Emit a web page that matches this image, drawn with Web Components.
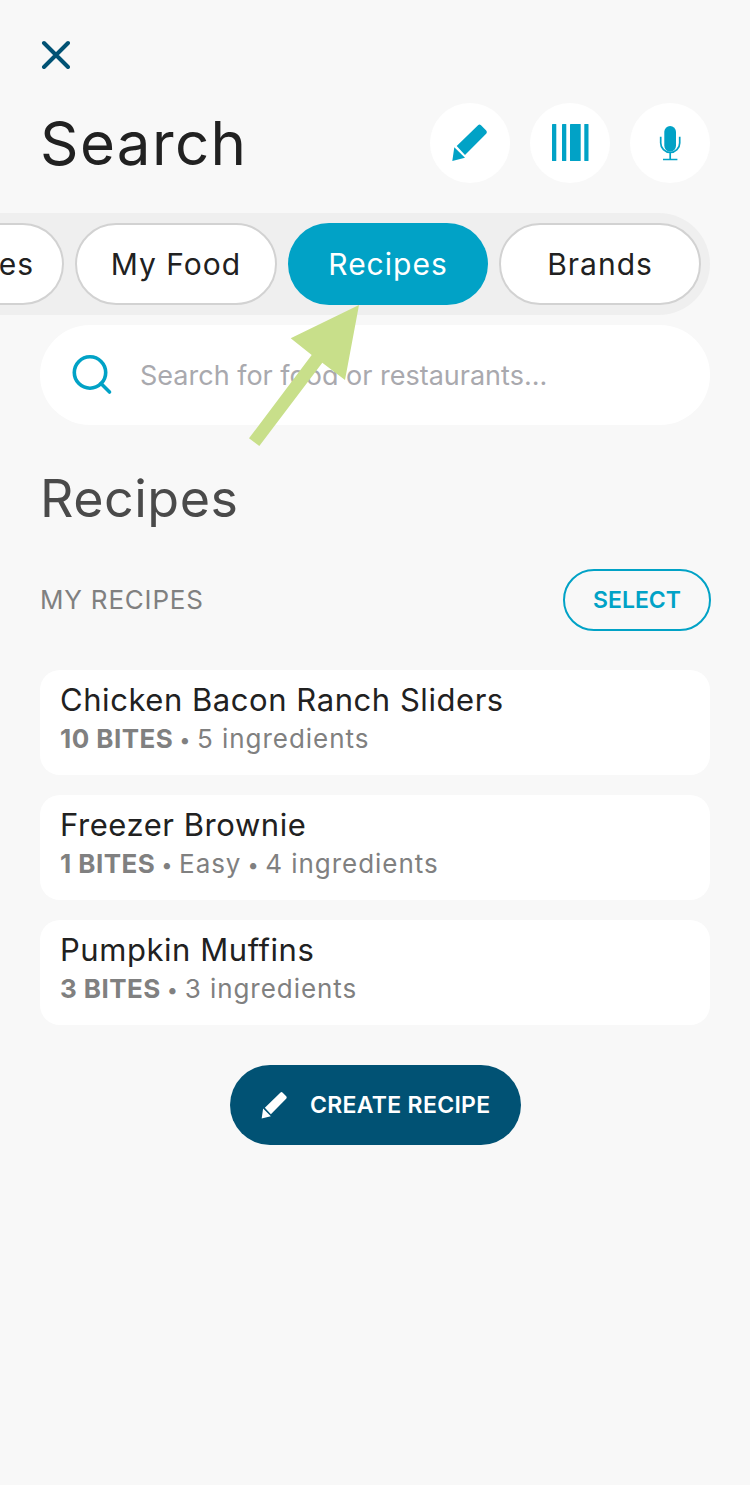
<!DOCTYPE html>
<html>
<head>
<meta charset="utf-8">
<title>Search</title>
<style>
  html, body { margin: 0; background: #f8f8f8; }
  body { font-family: Inter, "Liberation Sans", sans-serif; color: #212121; }
</style>
</head>
<body>
<search-screen>
  <search-header></search-header>
  <tab-strip>
    <tab-pill class="cut">es</tab-pill>
    <tab-pill>My Food</tab-pill>
    <tab-pill active>Recipes</tab-pill>
    <tab-pill>Brands</tab-pill>
  </tab-strip>
  <search-box></search-box>
  <section-title></section-title>
  <recipe-card name="Chicken Bacon Ranch Sliders" bites="10 BITES" info="5 ingredients"></recipe-card>
  <recipe-card name="Freezer Brownie" bites="1 BITES" info="Easy • 4 ingredients"></recipe-card>
  <recipe-card name="Pumpkin Muffins" bites="3 BITES" info="3 ingredients"></recipe-card>
  <create-button></create-button>
  <hint-arrow></hint-arrow>
</search-screen>

<script>
const pencilPath = "M28.3 2 Q29.5 1 31 2.2 L36.2 7.4 Q37.5 9 36.4 10.4 L15 32 L6.7 23 Z M4.3 24.3 L15 34.7 L2.3 38 Z"

function define(name, html, setup) {
  customElements.define(name, class extends HTMLElement {
    connectedCallback() {
      if (this.shadowRoot) return
      this.attachShadow({ mode: "open" })
      this.shadowRoot.innerHTML = html
      if (setup) setup(this)
    }
  })
}

define("search-screen", /*html*/ `
  <style>
    :host { display: block; position: relative; height: 1485px; box-sizing: border-box; padding: 40px 40px 0; overflow: hidden; }
  </style>
  <slot></slot>
`)

define("search-header", /*html*/ `
  <style>
    :host { display: block; }
    .close { display: block; margin: 0 0 34px 0; width: 30px; height: 29px; }
    .row { display: flex; align-items: center; gap: 20px; }
    h1 { margin: 0 auto 0 0; font-size: 60px; line-height: 80px; font-weight: 400; letter-spacing: 1.4px; }
    .round { width: 80px; height: 80px; border-radius: 50%; background: #fff; display: flex; align-items: center; justify-content: center; }
    svg { fill: #01a2c6; }
  </style>
  <svg class="close" viewBox="0 0 30 29" style="fill:none"><path d="M4 3 L28 27 M28 3 L4 27" stroke="#015274" stroke-width="4" stroke-linecap="round"/></svg>
  <div class="row">
    <h1>Search</h1>
    <div class="round"><svg width="40" height="40" viewBox="0 0 40 40"><path d="${pencilPath}"/></svg></div>
    <div class="round"><svg width="40" height="40" viewBox="0 0 40 40"><rect x="2" y="1" width="4.3" height="37" rx=".6"/><rect x="12" y="1" width="4.3" height="37" rx=".6"/><rect x="20" y="1" width="10.7" height="37" rx=".6"/><rect x="34.3" y="1" width="4.2" height="37" rx=".6"/></svg></div>
    <div class="round"><svg width="40" height="40" viewBox="0 0 40 40"><rect x="14.3" y="3" width="11.7" height="25.7" rx="5.85"/><path d="M10.7 13.7 V20 A9.5 9.5 0 0 0 29.7 20 V13.7 M20.2 29.5 V36 M13 36.5 H27.4" fill="none" stroke="#01a2c6" stroke-width="1.7"/></svg></div>
  </div>
`)

define("tab-strip", /*html*/ `
  <style>
    :host { display: flex; justify-content: flex-end; gap: 11px; box-sizing: border-box; height: 102px; margin: 30px 0 10px -40px; padding: 10px 9px 10px 0; background: #efefef; border-radius: 0 51px 51px 0; }
  </style>
  <slot></slot>
`)

define("tab-pill", /*html*/ `
  <style>
    :host { display: flex; flex: none; align-items: center; justify-content: center; box-sizing: border-box; width: 202px; height: 82px; background: #fff; border: 2px solid #d2d2d2; border-radius: 41px; font-size: 30px; letter-spacing: 1px; color: #212121; }
    :host([active]) { width: 200px; background: #01a2c6; border: 0; color: #fff; }
    /* tab scrolled past the left edge, only its end shows */
    :host(.cut) { width: 65px; border-left: 0; border-radius: 0 41px 41px 0; justify-content: flex-end; padding-right: 28px; }
  </style>
  <slot></slot>
`)

define("search-box", /*html*/ `
  <style>
    :host { display: flex; align-items: center; gap: 27px; box-sizing: border-box; height: 100px; padding-left: 30px; background: #fff; border-radius: 50px; font-size: 27px; color: #a9a9ae; }
  </style>
  <svg width="43" height="43" viewBox="0 0 43 43" fill="none" stroke="#01a2c6" stroke-width="3.6"><circle cx="20" cy="18.5" r="15.7"/><path d="M31 29.5 L39.5 38" stroke-linecap="round"/></svg>
  <span>Search for food or restaurants...</span>
`)

define("section-title", /*html*/ `
  <style>
    :host { display: block; }
    h2 { margin: 40px 0 36px; font-size: 52px; line-height: 68px; font-weight: 400; color: #4a4a4a; letter-spacing: .5px; }
    .row { display: flex; align-items: center; justify-content: space-between; margin-bottom: 39px; }
    .label { margin-bottom: 2px; font-size: 26px; color: #808080; letter-spacing: .8px; }
    .select { box-sizing: border-box; width: 148px; height: 62px; margin-right: -1px; display: flex; align-items: center; justify-content: center; border: 2px solid #01a2c6; border-radius: 31px; font-size: 23px; font-weight: 600; color: #01a2c6; }
  </style>
  <h2>Recipes</h2>
  <div class="row"><span class="label">MY RECIPES</span><span class="select">SELECT</span></div>
`)

define("recipe-card", /*html*/ `
  <style>
    :host { display: block; box-sizing: border-box; height: 105px; margin-bottom: 20px; padding: 11px 20px 0; background: #fff; border-radius: 20px; }
    .name { font-size: 31px; line-height: 38px; letter-spacing: .55px; color: #212121; }
    .meta { margin-top: 1px; font-size: 26px; line-height: 38px; letter-spacing: .45px; color: #808080; }
    .meta span { letter-spacing: .95px; }
    b { font-weight: 700; }
    i { font-style: normal; font-size: 20px; vertical-align: 1px; }
  </style>
  <div class="name"></div>
  <div class="meta"></div>
`, (el) => {
  const root = el.shadowRoot
  root.querySelector(".name").textContent = el.getAttribute("name")
  const meta = root.querySelector(".meta")
  const parts = [el.getAttribute("bites"), ...el.getAttribute("info").split(" • ")]
  parts.forEach((part, i) => {
    if (i > 0) {
      const dot = document.createElement("i")
      dot.textContent = " • "
      meta.append(dot)
    }
    const run = document.createElement(i === 0 ? "b" : "span")
    run.textContent = part
    meta.append(run)
  })
})

define("create-button", /*html*/ `
  <style>
    :host { display: flex; align-items: center; box-sizing: border-box; width: 291px; height: 80px; margin: 40px 0 0 190px; padding-left: 30px; gap: 21px; background: #015274; border-radius: 40px; color: #fff; font-size: 23px; font-weight: 600; letter-spacing: .3px; }
    svg { fill: #fff; flex: none; }
  </style>
  <svg width="29" height="29" viewBox="0 0 40 40"><path d="${pencilPath}"/></svg>
  <span>CREATE RECIPE</span>
`)

define("hint-arrow", /*html*/ `
  <style>
    :host { position: absolute; left: 240px; top: 300px; width: 130px; height: 150px; }
  </style>
  <svg width="130" height="150" viewBox="240 300 130 150"><polygon fill="#c8df8a" points="359,305 345,380 322.3,362.7 259.3,446 249,438.3 311.7,355 290.7,338.3"/></svg>
`)
</script>
</body>
</html>
